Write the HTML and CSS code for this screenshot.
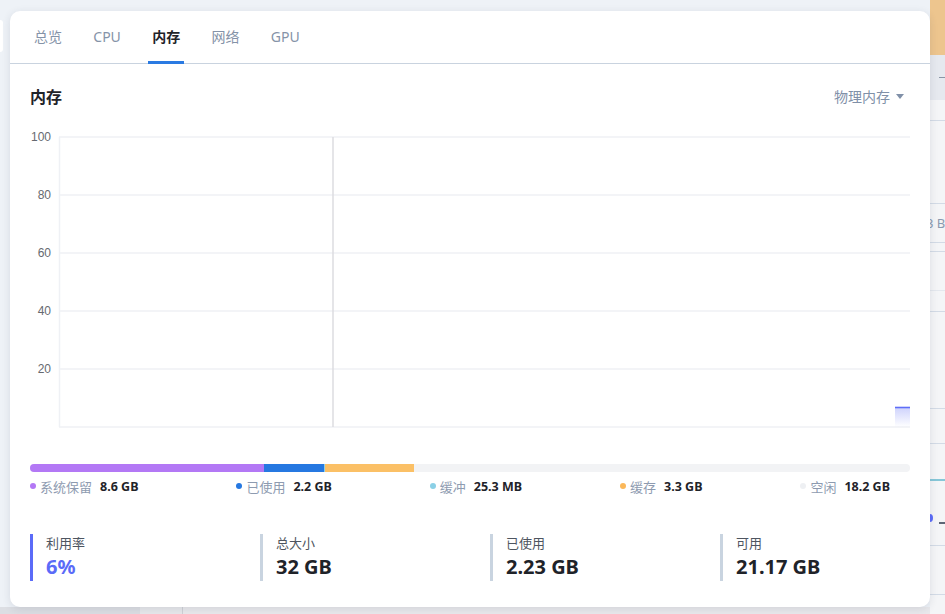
FILE: index.html
```html
<!DOCTYPE html>
<html lang="zh-CN">
<head>
<meta charset="utf-8">
<title>内存</title>
<link rel="stylesheet" href="styles.css">
</head>
<body>
<div class="page">
  <div class="page-left">
    <div class="page-main">
      <div class="side-tab"></div>
    </div>
    <div class="page-foot">
      <div class="foot-a"></div>
      <div class="foot-b"></div>
      <div class="foot-c"></div>
    </div>
  </div>
  <div class="page-right">
    <div class="pr-head"></div>
    <div class="pr-bar"><span class="pr-dash"></span></div>
    <div class="pr-row h21"></div>
    <div class="pr-row h83"></div>
    <div class="pr-row h39 txt"><span>3 B</span></div>
    <div class="pr-row h9"></div>
    <div class="pr-row h39 faint"></div>
    <div class="pr-row h21"></div>
    <div class="pr-row h97"></div>
    <div class="pr-row h35"></div>
    <div class="pr-row h37 teal"></div>
    <div class="pr-row h65 dot"><span class="pr-dot"></span><span class="pr-dash2"></span></div>
    <div class="pr-row h49"></div>
    <div class="pr-row last"></div>
  </div>
</div>

<div class="modal">
  <div class="tabs">
    <div class="tab">总览</div>
    <div class="tab">CPU</div>
    <div class="tab active">内存</div>
    <div class="tab">网络</div>
    <div class="tab">GPU</div>
  </div>
  <div class="body">
    <div class="title-row">
      <div class="title">内存</div>
      <div class="select">物理内存 <span class="caret"></span></div>
    </div>
    <svg class="chart" width="880" height="305" viewBox="0 0 880 305">
      <g class="grid">
        <line x1="29" y1="10" x2="880" y2="10"/>
        <line x1="29" y1="68" x2="880" y2="68"/>
        <line x1="29" y1="126" x2="880" y2="126"/>
        <line x1="29" y1="184" x2="880" y2="184"/>
        <line x1="29" y1="242" x2="880" y2="242"/>
        <line x1="29" y1="300" x2="880" y2="300"/>
        <line x1="29.5" y1="10" x2="29.5" y2="300"/>
      </g>
      <line class="cursor" x1="303" y1="10" x2="303" y2="300"/>
      <g class="ylab">
        <text x="21" y="14">100</text>
        <text x="21" y="72">80</text>
        <text x="21" y="130">60</text>
        <text x="21" y="188">40</text>
        <text x="21" y="246">20</text>
      </g>
      <defs>
        <linearGradient id="fade" x1="0" y1="0" x2="0" y2="1">
          <stop offset="0" stop-color="#6f7cf6" stop-opacity="0.35"/>
          <stop offset="1" stop-color="#6f7cf6" stop-opacity="0"/>
        </linearGradient>
      </defs>
      <rect x="865" y="280" width="15" height="20" fill="url(#fade)"/>
      <line x1="865" y1="280.5" x2="880" y2="280.5" stroke="#5f6ef7" stroke-width="1.6"/>
    </svg>

    <div class="stack">
      <div class="seg purple" style="width:234px"></div>
      <div class="seg blue" style="width:60px"></div>
      <div class="seg cyan" style="width:1px"></div>
      <div class="seg orange" style="width:89px"></div>
    </div>
    <div class="legend">
      <div class="li"><span class="dot purple"></span><span class="lab">系统保留</span><b>8.6 GB</b></div>
      <div class="li"><span class="dot blue"></span><span class="lab">已使用</span><b>2.2 GB</b></div>
      <div class="li"><span class="dot cyan"></span><span class="lab">缓冲</span><b>25.3 MB</b></div>
      <div class="li"><span class="dot orange"></span><span class="lab">缓存</span><b>3.3 GB</b></div>
      <div class="li"><span class="dot free"></span><span class="lab">空闲</span><b>18.2 GB</b></div>
    </div>

    <div class="stats">
      <div class="stat primary"><div class="slab">利用率</div><div class="sval">6%</div></div>
      <div class="stat"><div class="slab">总大小</div><div class="sval">32 GB</div></div>
      <div class="stat"><div class="slab">已使用</div><div class="sval">2.23 GB</div></div>
      <div class="stat"><div class="slab">可用</div><div class="sval">21.17 GB</div></div>
    </div>
  </div>
</div>
</body>
</html>
```

FILE: styles.css
```css
* { box-sizing: border-box; }
html, body { margin: 0; padding: 0; }
body {
  width: 945px;
  height: 614px;
  overflow: hidden;
  background: #eef2f7;
  font-family: "Noto Sans", "Noto Sans CJK SC", sans-serif;
  position: relative;
}

/* background page */
.page {
  display: grid;
  grid-template-columns: 930px 15px;
  height: 614px;
}
.page-left { display: flex; flex-direction: column; }
.page-main { flex: 1; padding-top: 20px; }
.side-tab {
  width: 3px; height: 32px; background: #fff; border-radius: 0 4px 4px 0;
}
.page-foot { height: 7px; display: flex; }
.foot-a { width: 140px; background: #dcdee3; }
.foot-b { width: 43px; background: #e7e8eb; border-right: 1px solid #cfd1d6; }
.foot-c { flex: 1; background: #e9e9ec; }

.page-right { background: #f4f5f7; display: flex; flex-direction: column; }
.pr-head { height: 55px; background: #edc58e; flex: none; }
.pr-bar { height: 45px; background: #e6e9ef; display: flex; align-items: center; justify-content: flex-end; flex: none; }
.pr-dash { width: 6px; height: 1.5px; background: #8a95a5; }
.pr-row { border-bottom: 1px solid #d3dbe6; flex: none; }
.h21 { height: 21px; }
.h83 { height: 83px; }
.h39 { height: 39px; }
.h9 { height: 9px; }
.h97 { height: 97px; }
.h35 { height: 35px; }
.h37 { height: 37px; }
.h65 { height: 65px; }
.h49 { height: 49px; }
.faint { border-bottom-color: #e4e8ee; }
.txt { position: relative; }
.txt span { position: absolute; left: -4px; top: 10px; font-size: 13px; color: #8a9ab0; white-space: nowrap; }
.teal { border-bottom: 2px solid #86c7d8; }
.dot { position: relative; }
.pr-dot { position: absolute; left: -3px; top: 33px; width: 6px; height: 8px; border-radius: 50%; background: #5b6cf9; }
.pr-dash2 { position: absolute; right: 0; top: 41px; width: 6px; height: 1.5px; background: #5d6676; }
.last { border-bottom: none; flex: 1; }

/* modal card */
.modal {
  position: absolute;
  left: 10px;
  top: 11px;
  width: 920px;
  height: 596px;
  background: #fff;
  border-radius: 10px;
  box-shadow: 0 2px 8px rgba(40, 50, 70, 0.12);
  overflow: hidden;
}
.tabs {
  display: flex;
  gap: 23.3px;
  height: 53px;
  padding: 0 20px;
  border-bottom: 1px solid #c9d3df;
}
.tab {
  padding: 0 4px;
  font-size: 14px;
  line-height: 52px;
  color: #8593a8;
  border-bottom: 3px solid transparent;
  height: 53px;
}
.tab.active {
  color: #1f2329;
  font-weight: 700;
  border-bottom-color: #2a7ae2;
}

.body { padding: 19px 20px 0 20px; }
.title-row {
  display: flex;
  justify-content: space-between;
  align-items: center;
  height: 26px;
}
.title { font-size: 16px; font-weight: 700; color: #1f2329; }
.select {
  font-size: 14px;
  color: #8090a8;
  display: flex;
  align-items: center;
  gap: 6px;
  padding-right: 6px;
}
.caret {
  width: 0; height: 0;
  border-left: 4px solid transparent;
  border-right: 4px solid transparent;
  border-top: 5px solid #8090a8;
}

.chart { display: block; margin-top: 18px; }
.grid line { stroke: #eff1f5; stroke-width: 1.5; }
.cursor { stroke: #dcdde1; stroke-width: 1.5; }
.ylab text {
  font-family: "Liberation Sans", Arial, sans-serif;
  font-size: 12px;
  fill: #666a70;
  text-anchor: end;
}

.stack {
  margin-top: 32px;
  height: 8px;
  border-radius: 4px;
  background: #f2f3f5;
  display: flex;
  overflow: hidden;
}
.seg { height: 8px; }
.seg.purple { background: #b378f5; }
.seg.blue { background: #2678e1; }
.seg.cyan { background: #8bd0e6; }
.seg.orange { background: #fbc066; }

.legend {
  display: flex;
  justify-content: space-between;
  padding-right: 20px;
  margin-top: 4px;
  height: 20px;
  align-items: center;
}
.li { display: flex; align-items: center; font-size: 13px; }
.li .dot { width: 6px; height: 6px; border-radius: 50%; margin-right: 4px; }
.dot.purple { background: #b378f5; }
.dot.blue { background: #2678e1; }
.dot.cyan { background: #8bd0e6; }
.dot.orange { background: #fbb85a; }
.dot.free { background: #eef0f3; }
.lab { color: #8e9bb0; margin-right: 8px; }
.li b { font-size: 12.5px; font-weight: 700; color: #1f2329; }

.stats {
  display: grid;
  grid-template-columns: repeat(4, 230px);
  margin-top: 38px;
}
.stat {
  border-left: 3px solid #c9d4e0;
  padding-left: 13px;
  height: 47px;
}
.stat.primary { border-left-color: #5b6bf8; }
.slab { font-size: 13px; color: #4e5560; line-height: 20px; margin-top: -1px; }
.sval { font-size: 20px; font-weight: 700; color: #1f2329; line-height: 27px; }
.stat.primary .sval { color: #5b6bf8; }
```
